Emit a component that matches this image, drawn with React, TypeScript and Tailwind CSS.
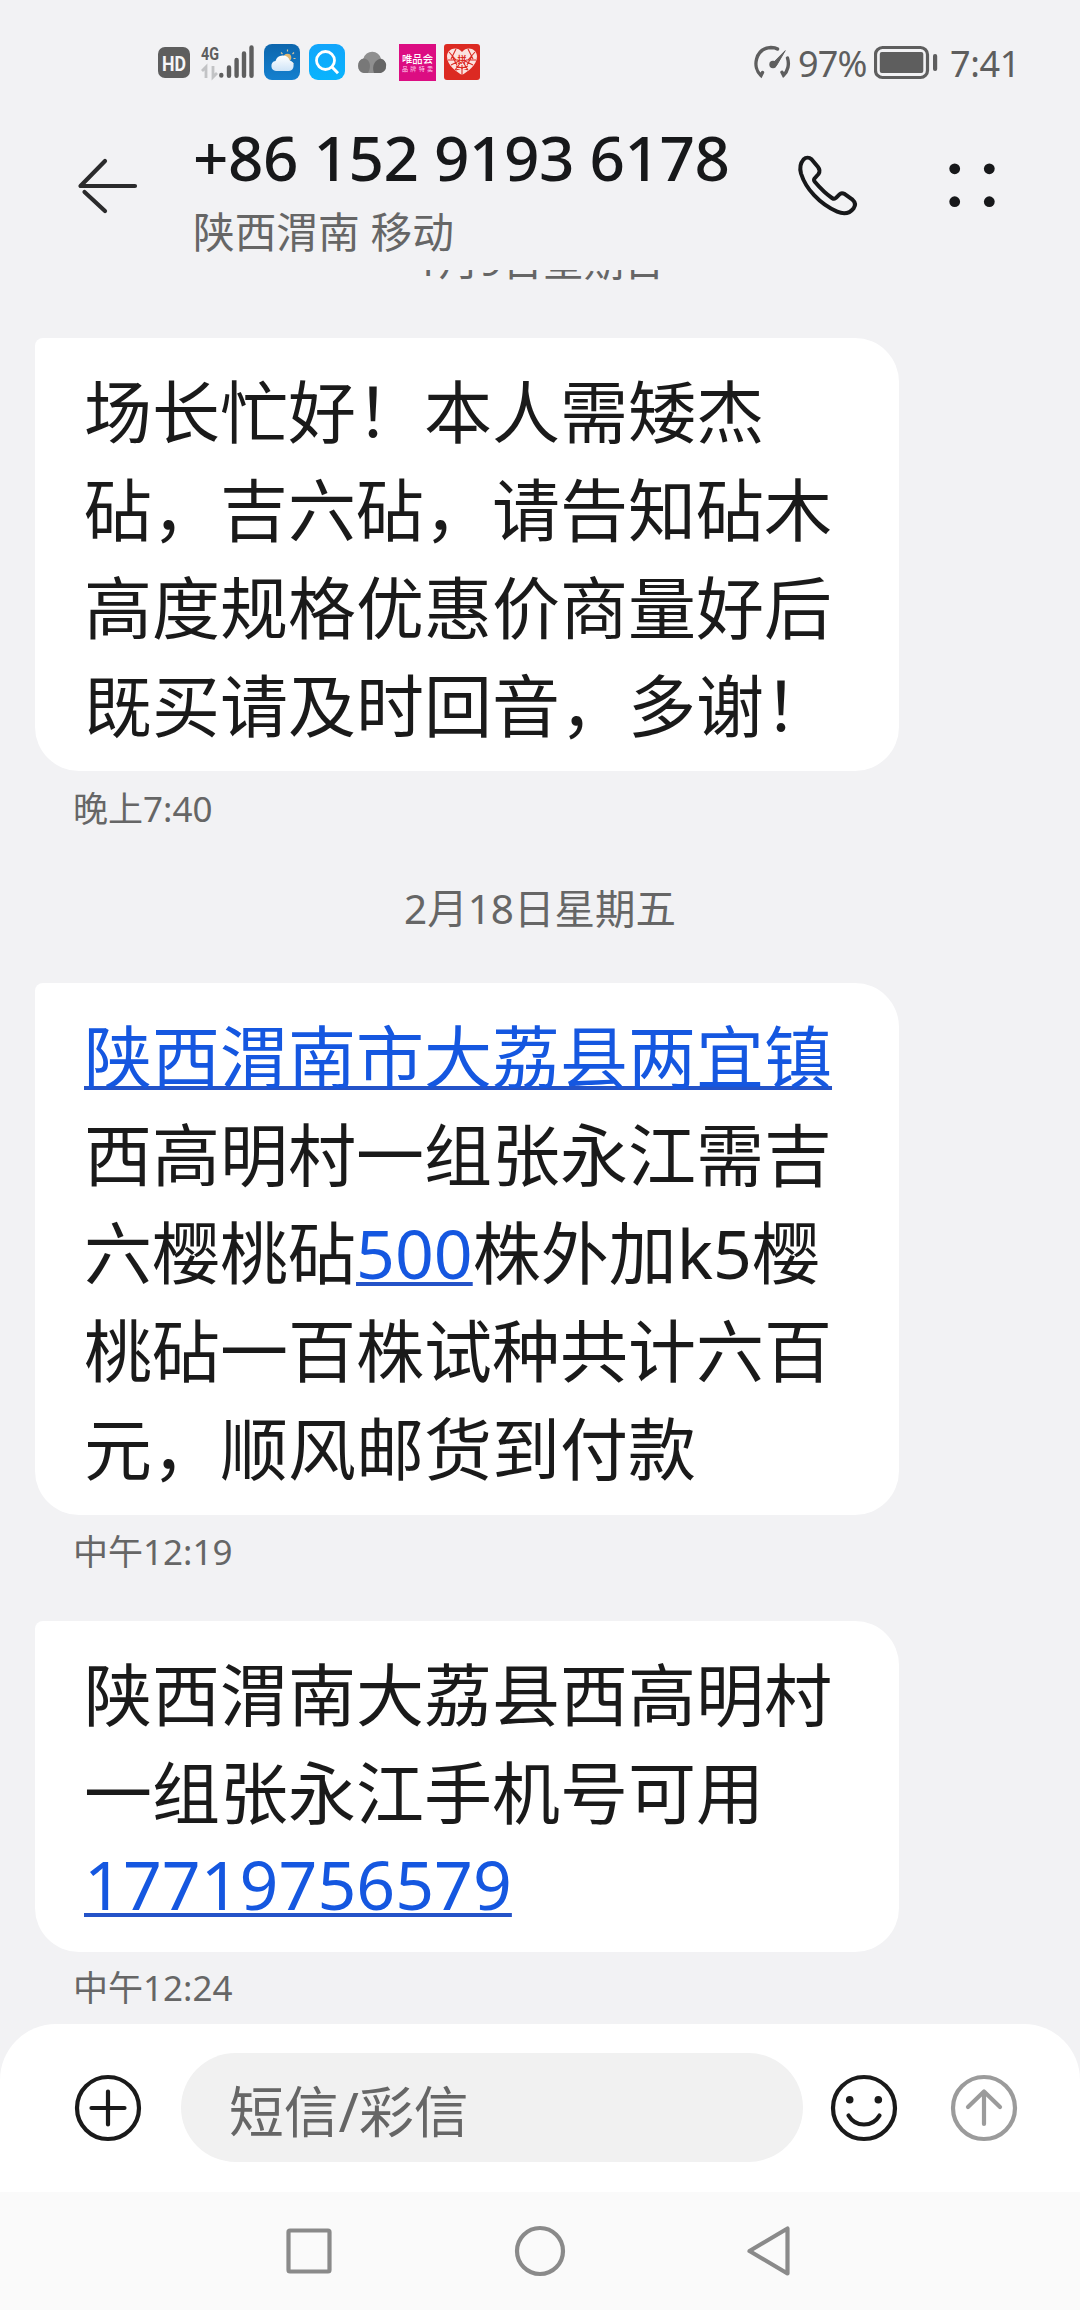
import type { ReactNode } from "react";

function StatusBar() {
  return (
    <div className="flex h-[90px] shrink-0 items-start justify-between pl-[157px] pr-[63px] pt-[44px] text-[#5e5e5e]">
      <svg className="overflow-visible" width="324" height="38" viewBox="157 44 324 38">
        <rect x="158" y="47" width="32" height="31" rx="7" fill="#5e5e5e" />
        <text x="174" y="70.500" textAnchor="middle" fontSize="21" fontWeight="700" fontFamily="Roboto, sans-serif" fill="#f6f6f8" textLength="24" lengthAdjust="spacingAndGlyphs">HD</text>
        <text x="201" y="59.5" fontSize="19" fontWeight="700" fontFamily="Roboto, sans-serif" fill="#5e5e5e" textLength="18" lengthAdjust="spacingAndGlyphs">4G</text>
        <g stroke="#c2c3c5" strokeWidth="2.8" fill="none">
          <path d="M202 71l4-4v11M217 73l-4 4V66" />
        </g>
        <g stroke="#5e5e5e" strokeWidth="4.4" strokeLinecap="round">
          <path d="M221.300 75v.6M229 67.500v8.300M236.600 60v15.800M244 53.500v22.300M251.500 47.500v28.300" />
        </g>
        <defs>
          <linearGradient id="cloud" x1="0" y1="0" x2="0" y2="1">
            <stop offset="0" stopColor="#ffffff" />
            <stop offset="1" stopColor="#cfe4f7" />
          </linearGradient>
          <linearGradient id="sky" x1="0" y1="0" x2="0" y2="1">
            <stop offset="0" stopColor="#0d66ad" />
            <stop offset="1" stopColor="#1480cf" />
          </linearGradient>
          <linearGradient id="search" x1="0" y1="0" x2="0" y2="1">
            <stop offset="0" stopColor="#12a5fb" />
            <stop offset="1" stopColor="#09b4fd" />
          </linearGradient>
        </defs>
        <rect x="264" y="44" width="36" height="36" rx="8" fill="url(#sky)" />
        <circle cx="287.500" cy="57.500" r="3.800" fill="#e2b873" />
        <path d="M287.500 51.500v-2M292.500 54l1.500-1.500M282.500 54l-1.500-1.500M293.500 58.500h2M292 62.500l1.500 1.500" stroke="#d9c49b" strokeWidth="1.200" />
        <path d="M276 71a5 5 0 0 1-.5-9.900 7.500 7.500 0 0 1 14.300-.6 5.400 5.400 0 0 1-.8 10.500z" fill="url(#cloud)" />
        <rect x="309" y="44" width="36" height="36" rx="9" fill="url(#search)" />
        <circle cx="325.500" cy="60.500" r="9" fill="none" stroke="#fff" strokeWidth="2.800" />
        <path d="M332 67l6 6.200" stroke="#fff" strokeWidth="3" />
        <path d="M364 73a7.500 7.500 0 0 1-.5-14.500 9 9 0 0 1 17.500.3 7.400 7.400 0 0 1-.5 14.200z" fill="#8f8f8f" />
        <path d="M374 73c-3-8 2-14 7-14.200A7.400 7.400 0 0 1 380.500 73z" fill="#666" />
        <path d="M364 73a7.500 7.500 0 0 1-.5-14.500c5 0 9 6 4.500 14.500z" fill="#787878" />
        <rect x="399" y="44" width="37" height="37" fill="#dc0d82" />
        <text x="417.500" y="62.500" textAnchor="middle" fontSize="10.500" fontWeight="500" fontFamily="'Noto Sans CJK SC', sans-serif" fill="#fff" textLength="31" lengthAdjust="spacingAndGlyphs">唯品会</text>
        <text x="417.500" y="70.500" textAnchor="middle" fontSize="6" fontFamily="'Noto Sans CJK SC', sans-serif" fill="#ffd3ee" textLength="31">品牌特卖</text>
        <rect x="444" y="44" width="36" height="36" rx="3" fill="#dc2a22" />
        <path d="M462 75c-5-3-15-9.500-15-18.500 0-8 10-11 15-4.500 5-6.500 15-3.500 15 4.500 0 9-10 15.500-15 18.500z" fill="#fbe3df" />
        <g stroke="#dc2a22" strokeWidth="1.100" fill="none">
          <path d="M449 52l7 8M456 49l-5 10M448 60h10M451 65l8-4M455 70l6-8M462 65v10M468 70l-5-8M473 65l-8-4M476 60h-10M475 52l-7 8M468 49l5 10M452 56l5 9M472 56l-5 9M456 66l12 4M468 66l-12 4" />
        </g>
        <text x="462" y="63" textAnchor="middle" fontSize="9" fontWeight="700" fontFamily="'Noto Sans CJK SC', sans-serif" fill="#dc2a22">拼</text>
      </svg>
      <div className="flex h-[38px] items-start">
        <svg width="40" height="36" viewBox="752 44 40 36" fill="none" stroke="#5e5e5e" strokeWidth="3.400" strokeLinecap="round">
          <path d="M762.500 72.500l-1.500 3c-9-8-6-27 10-28 2.500 0 5 .5 6.500 1.500M787.500 58c2 6 .5 13-4 17.300l-1.500-3" />
          <path d="M785 51l-8.500 14.500-3.500-2z" fill="#5e5e5e" strokeWidth="1" />
          <circle cx="773" cy="64.500" r="3.700" fill="#5e5e5e" stroke="none" />
        </svg>
        <span className="ml-[6px] w-[76px] whitespace-nowrap text-[36px] leading-[39px] tracking-[-0.8px]">97%</span>
        <svg width="66" height="36" viewBox="874 44 66 36">
          <rect x="875.500" y="47.500" width="52" height="30" rx="7" fill="none" stroke="#5e5e5e" strokeWidth="3.200" />
          <rect x="879.800" y="52" width="43.500" height="21" rx="2" fill="#5e5e5e" />
          <rect x="933" y="54" width="4.200" height="17" rx="2" fill="#5e5e5e" />
        </svg>
        <span className="ml-[10px] w-[67px] whitespace-nowrap text-[36px] leading-[39px] tracking-[-0.4px]">7:41</span>
      </div>
    </div>
  );
}

function Header() {
  return (
    <header className="flex h-[180px] shrink-0">
      <svg className="ml-[70px] mt-[62px] shrink-0" width="76" height="68" viewBox="70 152 76 68" fill="none" stroke="#2b2b2c" strokeWidth="4.200" strokeLinecap="round" strokeLinejoin="round">
        <path d="M105 161L80.500 186H135M84.500 192L105 211" />
      </svg>
      <div className="ml-[47px] mt-[27px] w-[580px] whitespace-nowrap">
        <h1 className="h-[80px] text-[62px] font-medium leading-[80px] tracking-[-0.5px] text-[#17181a]">+86 152 9193 6178</h1>
        <p className="text-[41.700px] leading-[69px] text-[#666]">陕西渭南 移动</p>
      </div>
      <svg className="ml-[18px] mt-[59px] shrink-0" width="72" height="72" viewBox="792 150 72 72" fill="none" stroke="#17181a" strokeWidth="4" strokeLinejoin="round">
        <path d="M804.500 160.500c2.500-2.500 5.800-2.200 8-.2l6.500 7.700c2 2.500 2 4.500.5 7l-4 4.500c-.8 1-.3 2.500.5 3.500 5.500 6.500 10.500 11.500 17 16 1.500 1 3 1 4-.2l3.500-3.500c1.500-1.500 3.500-1.200 5.300-.2l7.700 5.600c2.800 2.500 3.300 5.300 1.200 8.500-4.200 5.500-10 6.200-16.500 3.500-17.500-7.500-31.500-23-36.200-38.200-1.500-5.500-.5-10.500 2.500-14z" />
      </svg>
      <svg className="ml-[81px] mt-[68px] shrink-0" width="56" height="56" viewBox="944 158 56 56" fill="#17181a">
        <circle cx="954.700" cy="168.800" r="5.400" />
        <circle cx="989.300" cy="168.800" r="5.400" />
        <circle cx="954.700" cy="201.700" r="5.400" />
        <circle cx="989.300" cy="201.700" r="5.400" />
      </svg>
    </header>
  );
}

function Bubble({ lines, height }: { lines: ReactNode[]; height: string }) {
  return (
    <div className={`ml-[35px] w-[864px] shrink-0 rounded-[44px] rounded-tl-[8px] bg-white pl-[49px] pt-[25px] text-[68px] leading-[98px] text-[#1a1a1a] ${height}`}>
      {lines.map((line, i) => (
        <div key={i} className="whitespace-nowrap">{line}</div>
      ))}
    </div>
  );
}

function Link({ children }: { children: ReactNode }) {
  return (
    <a className="text-[#1557e0] underline decoration-[#2453c8] decoration-[4px] underline-offset-[3px] [text-decoration-skip-ink:none]">{children}</a>
  );
}

function Time({ children }: { children: ReactNode }) {
  return <div className="ml-[73px] h-[50px] shrink-0 whitespace-nowrap text-[35px] leading-[50px] text-[#666]">{children}</div>;
}

function DateLabel({ children }: { children: ReactNode }) {
  return <div className="h-[52px] shrink-0 text-center text-[40.500px] leading-[52px] text-[#666]">{children}</div>;
}

function Composer() {
  return (
    <div className="flex h-[168px] shrink-0 items-start rounded-t-[56px] bg-white pl-[74px] pt-[29px]">
      <svg className="mt-[21px] shrink-0" width="68" height="68" viewBox="-34 -34 68 68" fill="none" stroke="#1a1a1a" strokeWidth="4.200" strokeLinecap="round">
        <circle r="31" />
        <path d="M-16.500 0h33M0-16.500v33" />
      </svg>
      <div className="ml-[39px] h-[109px] w-[622px] rounded-full bg-[#f1f1f1] pl-[48px] text-[54.800px] leading-[115px] text-[#666]">短信/彩信</div>
      <svg className="ml-[27px] mt-[21px] shrink-0" width="68" height="68" viewBox="-34 -34 68 68" fill="none" stroke="#1a1a1a" strokeWidth="4.200" strokeLinecap="round">
        <circle r="31" />
        <path d="M-15.500 7.500c7 12 24 12 31 0" />
        <circle cx="-14.300" cy="-8.300" r="3.800" fill="#1a1a1a" stroke="none" />
        <circle cx="14.300" cy="-8.300" r="3.800" fill="#1a1a1a" stroke="none" />
      </svg>
      <svg className="ml-[52px] mt-[21px] shrink-0" width="68" height="68" viewBox="-34 -34 68 68" fill="none" stroke="#9b9b9b" strokeWidth="4.200" strokeLinecap="round" strokeLinejoin="round">
        <circle r="31" />
        <path d="M0 16V-16M-16-1L0-16.500L16-1" />
      </svg>
    </div>
  );
}

function NavBar() {
  return (
    <nav className="flex h-[118px] shrink-0 items-start justify-center gap-[174px] bg-[#fafafa] pt-[31px]">
      <svg width="56" height="56" viewBox="-27 -28 56 56" fill="none" stroke="#8a8a8a" strokeWidth="4.200">
        <rect x="-20.500" y="-20.500" width="41" height="41" rx="1.500" />
      </svg>
      <svg width="56" height="56" viewBox="-28 -28 56 56" fill="none" stroke="#8a8a8a" strokeWidth="4.200">
        <circle r="23" />
      </svg>
      <svg width="56" height="56" viewBox="-28 -28 56 56" fill="none" stroke="#8a8a8a" strokeWidth="4.200" strokeLinejoin="round">
        <path d="M17.500-22.500v45L-20.500 0z" />
      </svg>
    </nav>
  );
}

export default function App() {
  return (
    <div className="flex h-[2310px] w-[1080px] flex-col overflow-hidden bg-[#f2f2f4] font-['Noto_Sans','Noto_Sans_CJK_SC',sans-serif]">
      <StatusBar />
      <Header />
      <main className="flex h-[1754px] shrink-0 flex-col overflow-hidden">
        <div className="-mt-[35px]">
          <DateLabel>1月9日星期日</DateLabel>
        </div>
        <div className="h-[51px] shrink-0" />
        <Bubble height="h-[433px]" lines={["场长忙好！本人需矮杰", "砧，吉六砧，请告知砧木", "高度规格优惠价商量好后", "既买请及时回音，多谢！"]} />
        <div className="h-[13px] shrink-0" />
        <Time>晚上7:40</Time>
        <div className="h-[49px] shrink-0" />
        <DateLabel>2月18日星期五</DateLabel>
        <div className="h-[48px] shrink-0" />
        <Bubble
          height="h-[532px]"
          lines={[
            <Link>陕西渭南市大荔县两宜镇</Link>,
            "西高明村一组张永江需吉",
            <>六樱桃砧<Link>500</Link>株外加k5樱</>,
            "桃砧一百株试种共计六百",
            "元，顺风邮货到付款",
          ]}
        />
        <div className="h-[12px] shrink-0" />
        <Time>中午12:19</Time>
        <div className="h-[44px] shrink-0" />
        <Bubble
          height="h-[331px]"
          lines={["陕西渭南大荔县西高明村", "一组张永江手机号可用", <div className="leading-[84px]"><Link>17719756579</Link></div>]}
        />
        <div className="h-[11px] shrink-0" />
        <Time>中午12:24</Time>
      </main>
      <Composer />
      <NavBar />
    </div>
  );
}
